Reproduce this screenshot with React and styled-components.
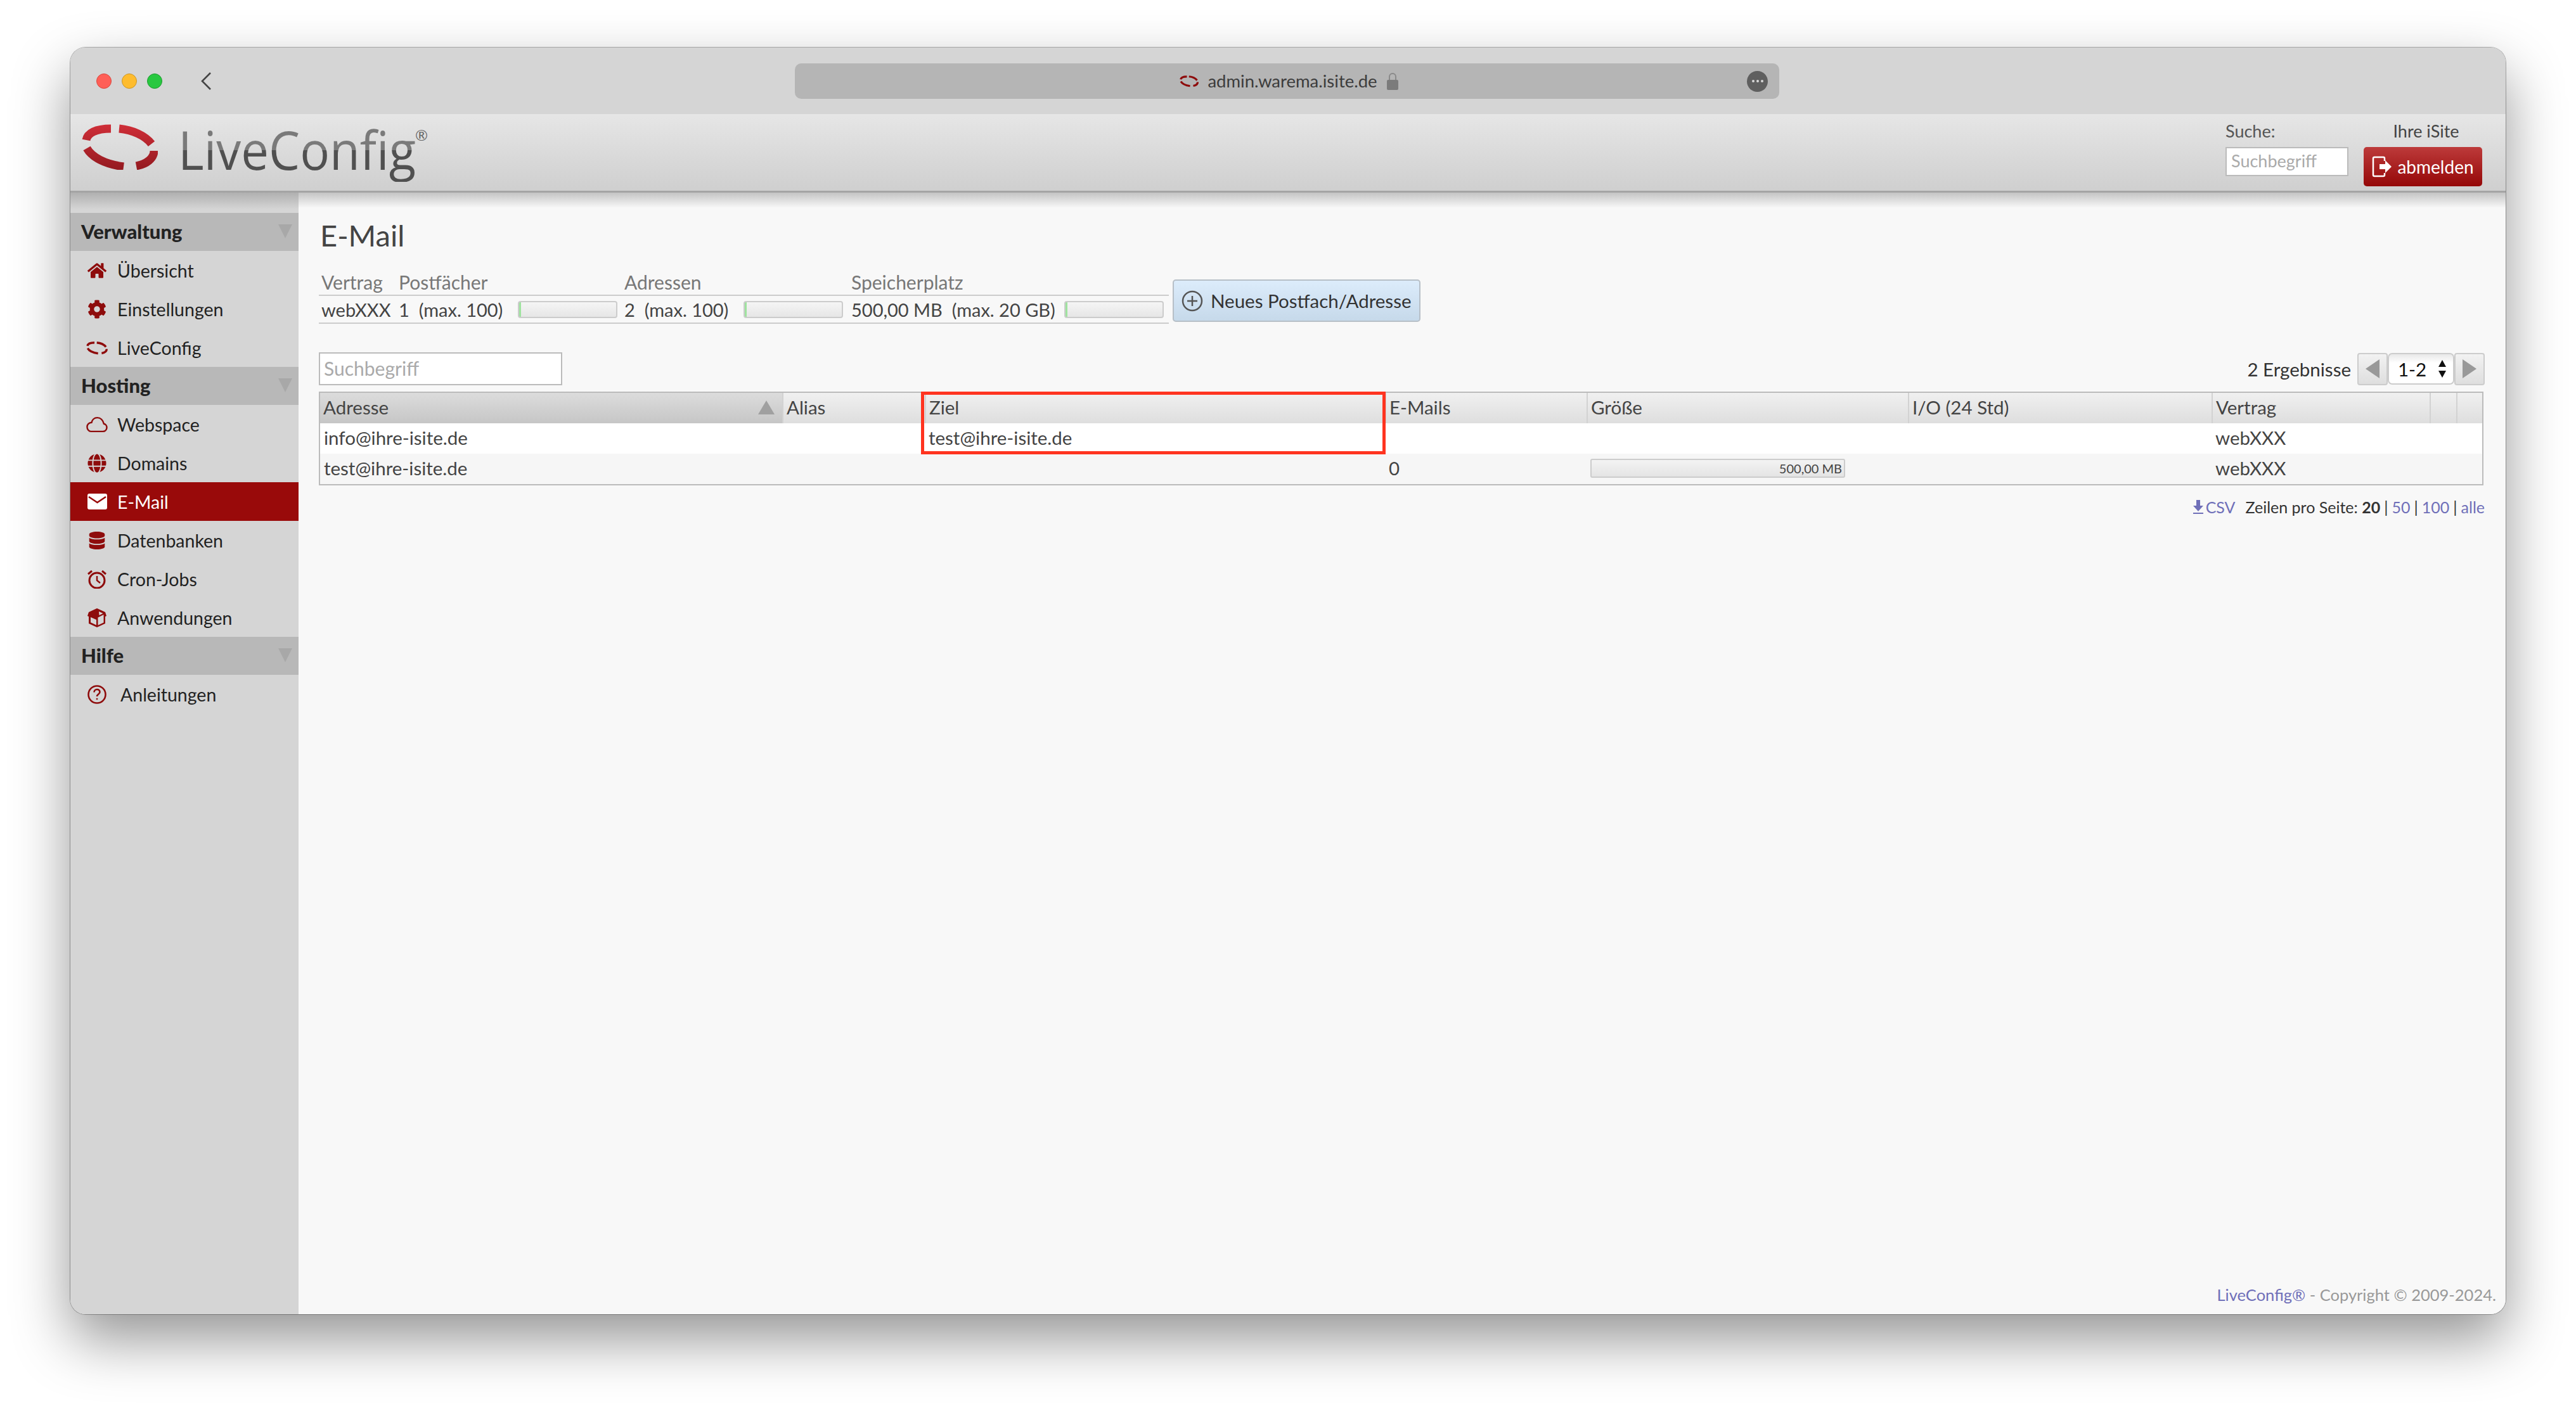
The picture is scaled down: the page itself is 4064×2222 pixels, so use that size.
import React from 'react';
import styled, {createGlobalStyle} from 'styled-components';
import {FaHome, FaCog, FaGlobe, FaDatabase} from 'react-icons/fa';

const GlobalStyle = createGlobalStyle`
  html, body {
    margin: 0;
    padding: 0;
    background: #fff;
  }
  * {
    box-sizing: border-box;
  }
`;

const Page = styled.div`
  width: 4064px;
  height: 2222px;
  padding: 75px 111px 0;
  font-family: Lato, "Noto Sans", sans-serif;
  overflow: hidden;
`;

const WinShadow = styled.div`
  width: 3842px;
  height: 1999px;
  border-radius: 24px;
  box-shadow: 0 0 0 1px rgba(0, 0, 0, 0.3), 0 40px 90px rgba(0, 0, 0, 0.42);
`;

const Win = styled.div`
  width: 100%;
  height: 100%;
  display: flex;
  flex-direction: column;
  border-radius: 24px;
  overflow: hidden;
  background: #d5d5d5;
`;

const TitleBar = styled.div`
  height: 105px;
  flex: none;
  display: flex;
  align-items: center;
  padding: 0 0 0 41px;
  background: #d5d5d5;
`;

const Light = styled.span`
  width: 24px;
  height: 24px;
  border-radius: 50%;
  margin-right: 16px;
  background: ${p => p.$color};
  border: 1px solid ${p => p.$edge};
`;

const BackIcon = styled.svg`
  width: 18px;
  height: 30px;
  margin-left: 44px;
`;

const UrlBar = styled.div`
  width: 1553px;
  height: 56px;
  margin-left: 920px;
  padding-left: 7px;
  background: #b5b5b5;
  border-radius: 10px;
  display: flex;
  align-items: center;
  justify-content: center;
  position: relative;
  font-size: 27.5px;
  color: #3c3c3c;
  gap: 14px;
`;

const MoreDot = styled.span`
  position: absolute;
  right: 18px;
  top: 12px;
  width: 33px;
  height: 33px;
  border-radius: 50%;
  background: #5f5f5f;
  display: flex;
  align-items: center;
  justify-content: center;
  gap: 3px;

  & > i {
    width: 4px;
    height: 4px;
    border-radius: 50%;
    background: #d8d8d8;
  }
`;

const Header = styled.header`
  height: 124px;
  flex: none;
  display: flex;
  justify-content: space-between;
  background: linear-gradient(#e6e6e6, #cfcfcf);
  border-bottom: 3px solid #a4a4a4;
  position: relative;
  z-index: 1;
`;

const Brand = styled.div`
  display: flex;
  align-items: flex-start;
  padding: 16px 0 0 18px;
`;

const BrandName = styled.div`
  font-family: "Open Sans", sans-serif;
  font-size: 85px;
  line-height: 104px;
  margin: -13px 0 0 32px;
  width: 420px;
  white-space: nowrap;
  transform-origin: left top;
  transform: scaleX(0.917);
  background: linear-gradient(#7a7a7a 0 54px, #505050 54px 100%);
  -webkit-background-clip: text;
  background-clip: text;
  color: transparent;
`;

const Registered = styled.span`
  font-size: 24px;
  line-height: 24px;
  color: #666;
  margin: 5px 0 0 -46px;
`;

const HeaderTools = styled.div`
  display: flex;
  gap: 24px;
  padding: 8px 37px 0 0;
`;

const ToolColumn = styled.div`
  display: flex;
  flex-direction: column;
  align-items: ${p => (p.$center ? 'center' : 'flex-start')};
  gap: 6px;
`;

const ToolLabel = styled.span`
  font-size: 27px;
  line-height: 38px;
  color: ${p => p.$color || '#555'};
  padding-left: ${p => p.$pad || 0}px;
`;

const HeaderInput = styled.div`
  width: 194px;
  height: 46px;
  background: #fff;
  border: 2px solid #bbb;
  font-size: 27px;
  line-height: 40px;
  color: #aaa;
  padding-left: 7px;
`;

const Logout = styled.div`
  width: 187px;
  height: 62px;
  border-radius: 5px;
  background: linear-gradient(#bd3a3a, #950808);
  display: flex;
  align-items: center;
  justify-content: center;
  gap: 8px;
  color: #fff;
  font-size: 28px;
`;

const Body = styled.div`
  flex: 1;
  min-height: 0;
  display: flex;
`;

const Sidebar = styled.nav`
  width: 360px;
  flex: none;
  padding-top: 32px;
  background: linear-gradient(#b0b0b0, #d5d5d5 26px);
`;

const SideHead = styled.div`
  height: 60px;
  background: #b8b8b8;
  display: flex;
  align-items: center;
  justify-content: space-between;
  padding: 0 10px 2px 17px;
  font-size: 31px;
  font-weight: 900;
  color: #222;
`;

const Tri = styled.span`
  width: 0;
  height: 0;
  border-left: 11px solid transparent;
  border-right: 11px solid transparent;
  border-top: 22px solid #a8a8a8;
`;

const SideItem = styled.a`
  height: 61px;
  display: flex;
  align-items: center;
  font-size: 28.5px;
  color: ${p => (p.$active ? '#fff' : '#222')};
  background: ${p => (p.$active ? '#990a0a' : 'transparent')};
`;

const SideIcon = styled.span`
  width: 34px;
  margin-left: 25px;
  margin-right: ${p => (p.$wide ? '20px' : '15px')};
  display: flex;
  justify-content: center;
  color: ${p => (p.$active ? '#fff' : '#8e0c0c')};
`;

const Main = styled.main`
  flex: 1;
  min-width: 0;
  position: relative;
  background: linear-gradient(#c4c4c4, #f8f8f8 24px);
  padding: 36px 33px 0 32px;
  display: flex;
  flex-direction: column;
`;

const Title = styled.h1`
  margin: 0;
  font-size: 47px;
  font-weight: 400;
  line-height: 62px;
  color: #444;
  padding-left: 2px;
`;

const StatsRow = styled.div`
  display: flex;
  align-items: flex-start;
  gap: 6px;
  margin-top: 22px;
`;

const Stats = styled.div`
  width: 1341px;
`;

const StatsHead = styled.div`
  height: 43px;
  display: flex;
  align-items: center;
  font-size: 30px;
  color: #777;
  border-bottom: 2px solid #ccc;
`;

const StatsBody = styled.div`
  height: 44px;
  display: flex;
  align-items: center;
  font-size: 29px;
  color: #444;
  border-bottom: 2px solid #ccc;
`;

const StatCell = styled.span`
  width: ${p => p.$w}px;
  padding-left: 4px;
  flex: none;
  white-space: pre;
  display: flex;
  align-items: center;
`;

const Meter = styled.span`
  height: 27px;
  width: 157px;
  display: block;
  flex: none;
  border: 2px solid #ccc;
  border-radius: 4px;
  background: linear-gradient(90deg, #9fe39f 0 3px, transparent 3px), linear-gradient(#f5f5f5, #e6e6e6);
  margin-left: ${p => p.$gap}px;
`;

const NewButton = styled.div`
  width: 391px;
  height: 67px;
  margin-top: 17px;
  border: 2px solid #b7bfc7;
  border-radius: 5px;
  background: linear-gradient(#dcecfb, #c6d9ea);
  display: flex;
  align-items: center;
  gap: 12px;
  padding-left: 12px;
  font-size: 29.5px;
  color: #333;
`;

const ToolRow = styled.div`
  display: flex;
  justify-content: space-between;
  align-items: center;
  margin-top: 45px;
  height: 52px;
`;

const TableSearch = styled.div`
  width: 384px;
  height: 52px;
  border: 2px solid #bbb;
  background: #fff;
  font-size: 30px;
  line-height: 46px;
  color: #aaa;
  padding-left: 6px;
`;

const Pager = styled.div`
  display: flex;
  align-items: center;
  font-size: 29.5px;
  color: #333;
`;

const PageArrow = styled.div`
  width: 48px;
  height: 51px;
  border: 2px solid #ccc;
  border-radius: 4px;
  background: linear-gradient(#f2f2f2, #dedede);
  display: flex;
  align-items: center;
  justify-content: center;
  margin-left: ${p => p.$ml || 0}px;
`;

const Arrow = styled.span`
  width: 0;
  height: 0;
  border-top: 15px solid transparent;
  border-bottom: 15px solid transparent;
  ${p => (p.$dir === 'left' ? 'border-right: 22px solid #999;' : 'border-left: 22px solid #999;')}
`;

const PageSelect = styled.div`
  width: 105px;
  height: 50px;
  border: 2px solid #ccc;
  border-radius: 7px;
  background: linear-gradient(#e8e8e8, #fff 30%, #fff);
  display: flex;
  align-items: center;
  justify-content: space-between;
  padding: 0 10px 0 14px;
  color: #111;
`;

const TableWrap = styled.div`
  position: relative;
  margin-top: 10px;
`;

const Table = styled.table`
  width: 3415px;
  border-collapse: separate;
  border-spacing: 0;
  table-layout: fixed;
  border: 2px solid #bbb;
  font-size: 29.5px;
  color: #444;
`;

const Th = styled.th`
  height: 48px;
  padding: 0 0 3px ${p => (p.$first ? '5px' : '5px')};
  font-weight: 400;
  text-align: left;
  white-space: nowrap;
  position: relative;
  border-left: ${p => (p.$first ? 'none' : '2px solid #d2d2d2')};
  background: ${p => (p.$sorted ? 'linear-gradient(#dcdcdc, #c6c6c6)' : 'linear-gradient(#f0f0f0, #dedede)')};
`;

const Td = styled.td`
  height: 48px;
  padding: 0 0 3px 6px;
  white-space: nowrap;
  background: ${p => (p.$odd ? '#f6f6f6' : '#fff')};
`;

const SortArrow = styled.span`
  position: absolute;
  right: 12px;
  top: 12px;
  width: 0;
  height: 0;
  border-left: 13px solid transparent;
  border-right: 13px solid transparent;
  border-bottom: 22px solid #a0a0a0;
`;

const SizeBar = styled.div`
  width: 402px;
  height: 30px;
  border: 2px solid #ccc;
  border-radius: 3px;
  background: linear-gradient(#f3f3f3, #e4e4e4);
  font-size: 20px;
  line-height: 26px;
  text-align: right;
  padding-right: 3px;
  color: #444;
`;

const Highlight = styled.div`
  position: absolute;
  left: 950px;
  top: 0;
  width: 733px;
  height: 99px;
  border: 5px solid #ff3420;
  pointer-events: none;
`;

const TableFoot = styled.div`
  display: flex;
  justify-content: flex-end;
  align-items: center;
  margin-top: 19px;
  font-size: 25px;
  color: #333;
`;

const Link = styled.a`
  color: #6f6fb8;
`;

const Bar = styled.span`
  color: #333;
  margin: 0 6px;
`;

const CsvLink = styled(Link)`
  display: flex;
  align-items: center;
  gap: 3px;
  margin-right: 16px;
`;

const Copyright = styled.div`
  position: absolute;
  right: 15px;
  bottom: 13px;
  font-size: 25.5px;
  line-height: 36px;
  color: #999;
`;

const columns = [
    {name: 'Adresse', width: 729, sorted: true},
    {name: 'Alias', width: 225},
    {name: 'Ziel', width: 726},
    {name: 'E-Mails', width: 318},
    {name: 'Größe', width: 507},
    {name: 'I/O (24 Std)', width: 479},
    {name: 'Vertrag', width: 344},
    {name: '', width: 42},
    {name: '', width: 41},
];

const Ring = ({width, height, color, gradientId, stroke = 13}) => (
    <svg width={width} height={height} viewBox="0 0 120 72" fill="none">
        {gradientId && (
            <defs>
                <linearGradient id={gradientId} x1="0" y1="0" x2="0" y2="72" gradientUnits="userSpaceOnUse">
                    <stop offset="0" stopColor="#cf2e38" />
                    <stop offset="1" stopColor="#941a20" />
                </linearGradient>
            </defs>
        )}
        <g stroke={gradientId ? `url(#${gradientId})` : color} strokeWidth={stroke}>
            <path d="M7 25 C9 14 22 7 46 7" />
            <path d="M59 7 C80 9 100 18 110 31" />
            <path d="M114 42 C114 54 102 63 86 66" />
            <path d="M8 38 C16 52 36 63 66 67" />
        </g>
    </svg>
);

const AlarmIcon = () => (
    <svg width="30" height="30" viewBox="0 0 30 30" fill="none" stroke="currentColor">
        <circle cx="15" cy="17" r="12" strokeWidth="3" />
        <path d="M15 10v7l5 4" strokeWidth="2.4" />
        <path d="M1 7l6-5M29 7l-6-5" strokeWidth="3" />
    </svg>
);

const BoxIcon = () => (
    <svg width="32" height="32" viewBox="0 0 32 32">
        <path d="M16 1l13 6 2 6-2 1v11l-13 6-13-6V14L1 13l2-6z" fill="currentColor" />
        <path d="M17.500 15.500l9-4.500v12.500l-9 4.200zM6 15l9 4v8.500l-9-4.200zM19 6l6.500 3-6 3z" fill="#d5d5d5" />
    </svg>
);

const CloudIcon = () => (
    <svg width="36" height="26" viewBox="0 0 36 26" fill="none" stroke="currentColor" strokeWidth="2.600">
        <path d="M8 24.500h20a6.500 6.500 0 0 0 1.500-12.800C28 6 24 1.500 18.500 1.500 13.500 1.500 10 5 9 9.500 4.500 9.500 1.500 13 1.500 17s3 7.500 6.500 7.500z" />
    </svg>
);

const MailIcon = () => (
    <svg width="31" height="25" viewBox="0 0 31 25">
        <rect width="31" height="25" rx="3" fill="#fff" />
        <path d="M2 5l13.500 9L29 5" fill="none" stroke="#990a0a" strokeWidth="2.600" />
    </svg>
);

const HelpIcon = () => (
    <svg width="30" height="30" viewBox="0 0 30 30" fill="none" stroke="currentColor" strokeWidth="2.600">
        <circle cx="15" cy="15" r="13.500" />
        <path d="M10.500 11.500c0-6 9-6 9-.5 0 3.500-4.500 3.500-4.500 7" />
        <circle cx="15" cy="22" r="1" fill="currentColor" strokeWidth="1" />
    </svg>
);

const LogoutIcon = () => (
    <svg width="32" height="34" viewBox="0 0 32 34">
        <path d="M20 8V4a2 2 0 0 0-2-2H4a2 2 0 0 0-2 2v26a2 2 0 0 0 2 2h14a2 2 0 0 0 2-2v-3" fill="none" stroke="#fff" strokeWidth="2.500" />
        <path d="M12 13h9V7l10 10-10 10v-6h-9z" fill="#fff" />
    </svg>
);

const LockIcon = () => (
    <svg width="20" height="28" viewBox="0 0 20 28">
        <path d="M5 13V7a5 5 0 0 1 10 0v6" fill="none" stroke="#8a8a8a" strokeWidth="2" />
        <rect x="1" y="12" width="18" height="16" rx="2" fill="#7b7b7b" />
    </svg>
);

const sections = [
    {
        title: 'Verwaltung',
        items: [
            {label: 'Übersicht', icon: <FaHome size={30} />},
            {label: 'Einstellungen', icon: <FaCog size={30} />},
            {label: 'LiveConfig', icon: <Ring width={34} height={24} color="#8e0c0c" stroke={12} />},
        ],
    },
    {
        title: 'Hosting',
        items: [
            {label: 'Webspace', icon: <CloudIcon />},
            {label: 'Domains', icon: <FaGlobe size={30} />},
            {label: 'E-Mail', icon: <MailIcon />, active: true},
            {label: 'Datenbanken', icon: <FaDatabase size={28} />},
            {label: 'Cron-Jobs', icon: <AlarmIcon />},
            {label: 'Anwendungen', icon: <BoxIcon />},
        ],
    },
    {
        title: 'Hilfe',
        items: [{label: 'Anleitungen', icon: <HelpIcon />, wide: true}],
    },
];

const rows = [
    {address: 'info@ihre-isite.de', target: 'test@ihre-isite.de', contract: 'webXXX'},
    {address: 'test@ihre-isite.de', mails: '0', size: '500,00 MB', contract: 'webXXX', odd: true},
];

export default function App() {
    return (
        <Page>
            <GlobalStyle />
            <WinShadow>
                <Win>
                    <TitleBar>
                        <Light $color="#ff5f57" $edge="#d9483f" />
                        <Light $color="#febc2e" $edge="#c9962a" />
                        <Light $color="#28c840" $edge="#1f9a30" />
                        <BackIcon viewBox="0 0 18 30" fill="none" stroke="#444" strokeWidth="2.600">
                            <path d="M16 2L3 15l13 13" />
                        </BackIcon>
                        <UrlBar>
                            <Ring width={30} height={20} color="#8e0c0c" stroke={13} />
                            <span>admin.warema.isite.de</span>
                            <LockIcon />
                            <MoreDot><i /><i /><i /></MoreDot>
                        </UrlBar>
                    </TitleBar>
                    <Header>
                        <Brand>
                            <Ring width={120} height={72} gradientId="brandRed" stroke={13} />
                            <BrandName>LiveConfig</BrandName>
                            <Registered>®</Registered>
                        </Brand>
                        <HeaderTools>
                            <ToolColumn>
                                <ToolLabel>Suche:</ToolLabel>
                                <HeaderInput>Suchbegriff</HeaderInput>
                            </ToolColumn>
                            <ToolColumn $center>
                                <ToolLabel $color="#444" $pad={10}>Ihre iSite</ToolLabel>
                                <Logout><LogoutIcon />abmelden</Logout>
                            </ToolColumn>
                        </HeaderTools>
                    </Header>
                    <Body>
                        <Sidebar>
                            {sections.map(section => (
                                <div key={section.title}>
                                    <SideHead>{section.title}<Tri /></SideHead>
                                    {section.items.map(item => (
                                        <SideItem key={item.label} $active={item.active}>
                                            <SideIcon $active={item.active} $wide={item.wide}>{item.icon}</SideIcon>
                                            {item.label}
                                        </SideItem>
                                    ))}
                                </div>
                            ))}
                        </Sidebar>
                        <Main>
                            <Title>E-Mail</Title>
                            <StatsRow>
                                <Stats>
                                    <StatsHead>
                                        <StatCell $w={122}>Vertrag</StatCell>
                                        <StatCell $w={356}>Postfächer</StatCell>
                                        <StatCell $w={358}>Adressen</StatCell>
                                        <StatCell $w={505}>Speicherplatz</StatCell>
                                    </StatsHead>
                                    <StatsBody>
                                        <StatCell $w={122}>webXXX</StatCell>
                                        <StatCell $w={356}>1  (max. 100)<Meter $gap={24} /></StatCell>
                                        <StatCell $w={358}>2  (max. 100)<Meter $gap={24} /></StatCell>
                                        <StatCell $w={505}>500,00 MB  (max. 20 GB)<Meter $gap={14} /></StatCell>
                                    </StatsBody>
                                </Stats>
                                <NewButton>
                                    <svg width="34" height="34" viewBox="0 0 34 34" fill="none" stroke="#555" strokeWidth="2.500">
                                        <circle cx="17" cy="17" r="15" />
                                        <path d="M17 9v16M9 17h16" />
                                    </svg>
                                    Neues Postfach/Adresse
                                </NewButton>
                            </StatsRow>
                            <ToolRow>
                                <TableSearch>Suchbegriff</TableSearch>
                                <Pager>
                                    2 Ergebnisse
                                    <PageArrow $ml={10}><Arrow $dir="left" /></PageArrow>
                                    <PageSelect>
                                        1-2
                                        <svg width="14" height="28" viewBox="0 0 14 28" fill="#111">
                                            <path d="M7 0l6 11H1zM7 28l6-11H1z" />
                                        </svg>
                                    </PageSelect>
                                    <PageArrow><Arrow $dir="right" /></PageArrow>
                                </Pager>
                            </ToolRow>
                            <TableWrap>
                                <Table>
                                    <colgroup>
                                        {columns.map((column, index) => (
                                            <col key={index} style={{width: column.width}} />
                                        ))}
                                    </colgroup>
                                    <thead>
                                        <tr>
                                            {columns.map((column, index) => (
                                                <Th key={index} $first={index === 0} $sorted={column.sorted}>
                                                    {column.name}
                                                    {column.sorted && <SortArrow />}
                                                </Th>
                                            ))}
                                        </tr>
                                    </thead>
                                    <tbody>
                                        {rows.map(row => (
                                            <tr key={row.address}>
                                                <Td $odd={row.odd}>{row.address}</Td>
                                                <Td $odd={row.odd} />
                                                <Td $odd={row.odd}>{row.target}</Td>
                                                <Td $odd={row.odd}>{row.mails}</Td>
                                                <Td $odd={row.odd}>{row.size && <SizeBar>{row.size}</SizeBar>}</Td>
                                                <Td $odd={row.odd} />
                                                <Td $odd={row.odd}>{row.contract}</Td>
                                                <Td $odd={row.odd} />
                                                <Td $odd={row.odd} />
                                            </tr>
                                        ))}
                                    </tbody>
                                </Table>
                                <Highlight />
                            </TableWrap>
                            <TableFoot>
                                <CsvLink>
                                    <svg width="18" height="24" viewBox="0 0 18 24" fill="#6f6fb8">
                                        <path d="M6 1h6v9h5l-8 9-8-9h5zM1 21h16v2H1z" />
                                    </svg>
                                    CSV
                                </CsvLink>
                                Zeilen pro Seite:&nbsp;<b>20</b><Bar>|</Bar><Link>50</Link><Bar>|</Bar><Link>100</Link><Bar>|</Bar><Link>alle</Link>
                            </TableFoot>
                            <Copyright><Link>LiveConfig®</Link> - Copyright © 2009-2024.</Copyright>
                        </Main>
                    </Body>
                </Win>
            </WinShadow>
        </Page>
    );
}
